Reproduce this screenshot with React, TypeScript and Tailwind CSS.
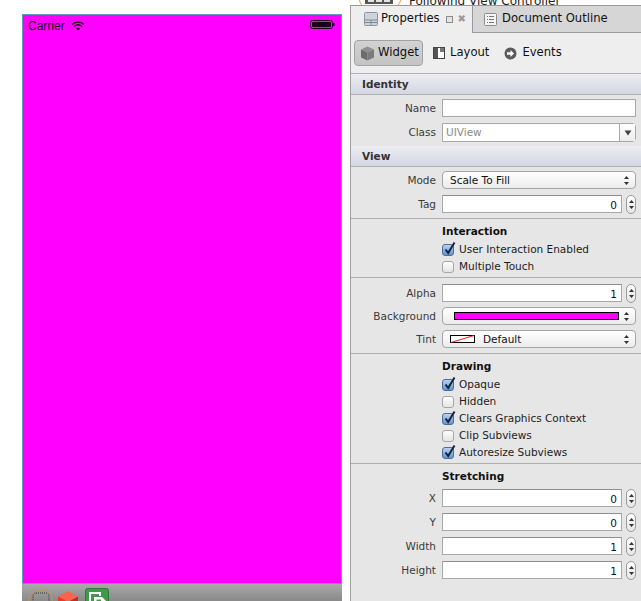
import React from 'react';

const Label: React.FC<{ text: string }> = ({ text }) => (
  <div className="w-[86px] shrink-0 text-right text-[#3a3a3a] pr-[1px] pt-[1px]">{text}</div>
);

const UpDown: React.FC = () => (
  <svg width="7" height="11" viewBox="0 0 7 11" className="shrink-0">
    <path d="M3.5 1 L6 4 H1 Z M3.5 10 L6 7 H1 Z" fill="#333" />
  </svg>
);

const Stepper: React.FC = () => (
  <div className="ml-[4px] w-[10px] h-[19px] rounded-[5px] border border-[#9a9a9a] bg-gradient-to-b from-white to-[#e6e6e6] flex items-center justify-center shrink-0">
    <UpDown />
  </div>
);

const NumberRow: React.FC<{ label: string; value: string; className?: string }> = ({ label, value, className }) => (
  <div className={`flex items-center h-[18px] ${className ?? ''}`}>
    <Label text={label} />
    <div className="ml-[5px] w-[180px] h-[18px] border border-[#a8a8a8] border-t-[#8e8e8e] bg-white text-right pr-[4px] leading-[18px] text-[#111]">
      {value}
    </div>
    <Stepper />
  </div>
);

const SelectRow: React.FC<{ label: string; className?: string; children: React.ReactNode }> = ({ label, className, children }) => (
  <div className={`flex items-center h-[18px] ${className ?? ''}`}>
    <Label text={label} />
    <div className="ml-[5px] w-[194px] h-[18px] rounded-[4px] border border-[#a6a6a6] bg-gradient-to-b from-white to-[#ececec] flex items-center pr-[5px]">
      <div className="flex-1 min-w-0 flex items-center">{children}</div>
      <UpDown />
    </div>
  </div>
);

const Check: React.FC<{ label: string; on?: boolean; className?: string }> = ({ label, on, className }) => (
  <div className={`flex items-center h-[17px] pl-[91px] ${className ?? ''}`}>
    <div className="relative w-[12px] h-[12px] shrink-0">
      <div
        className={
          on
            ? 'w-[12px] h-[12px] rounded-[3px] border border-[#4d6d99] bg-gradient-to-b from-[#b9d2ee] to-[#5f95d6]'
            : 'w-[12px] h-[12px] rounded-[3px] border border-[#a6a6a6] bg-gradient-to-b from-white to-[#e4e4e4]'
        }
      />
      {on && (
        <svg width="14" height="15" viewBox="0 0 14 15" className="absolute left-[1px] -top-[3px]">
          <path d="M2.5 8.5 L5.2 12 L11.5 1.5" fill="none" stroke="#12233c" strokeWidth="2" />
        </svg>
      )}
    </div>
    <span className="ml-[5px] text-[#1c1c1c]">{label}</span>
  </div>
);

const SectionHead: React.FC<{ title: string }> = ({ title }) => (
  <div className="h-[21px] pl-[11px] pt-[1px] flex items-center font-bold text-[#333] bg-gradient-to-b from-[#eceef3] to-[#d4d6e2] border-b border-[#aeaeae]">
    {title}
  </div>
);

const GroupTitle: React.FC<{ title: string; className?: string }> = ({ title, className }) => (
  <div className={`pl-[91px] font-bold text-[#111] h-[16px] leading-[16px] ${className ?? ''}`}>{title}</div>
);

export default function App() {
  return (
    <div
      className="w-[641px] h-[601px] overflow-hidden bg-white flex text-[10.5px]"
      style={{ fontFamily: '"DejaVu Sans", "Noto Sans", sans-serif' }}
    >
      {/* Canvas */}
      <div className="w-[350px] h-full shrink-0 pt-[14px] pl-[22px] pr-[8px] flex flex-col">
        <div className="h-[570px] shrink-0 bg-[#ff00ff] border border-[#5f9ab8] flex items-start justify-between pl-[5px] pr-[6px] pt-[4px]">
          <div className="flex items-center text-[12px] text-[#1a001a] h-[14px] leading-[14px]" style={{ fontFamily: '"Liberation Sans", sans-serif' }}>
            <span>Carrier</span>
            <svg width="14" height="10" viewBox="0 0 14 10" className="ml-[6px]">
              <path d="M1 3.4 C4.5 0.4 9.5 0.4 13 3.4 M3 5.5 C5.4 3.5 8.6 3.5 11 5.5" fill="none" stroke="#1a001a" strokeWidth="1.4" />
              <path d="M5 7.4 C6.2 6.4 7.8 6.4 9 7.4 L7 9.6 Z" fill="#1a001a" />
            </svg>
          </div>
          <svg width="25" height="10" viewBox="0 0 25 10" className="mt-[1px]">
            <rect x="0.5" y="0.5" width="22" height="8" rx="2" fill="none" stroke="#1a001a" />
            <rect x="2" y="2" width="19" height="5" rx="1" fill="#1a001a" />
            <rect x="23" y="3" width="1.5" height="3" fill="#1a001a" />
          </svg>
        </div>
        <div className="flex-1 bg-gradient-to-b from-[#aaaaaa] to-[#6f6f6f] flex items-start pl-[6px] pt-[5px]">
          <svg width="26" height="26" viewBox="0 0 26 26" className="shrink-0">
            <circle cx="12.5" cy="13" r="12" fill="none" stroke="#c8914a" />
            <rect x="5" y="4" width="16" height="14" rx="3" fill="none" stroke="#333" strokeDasharray="1 1" />
          </svg>
          <svg width="22" height="22" viewBox="0 0 22 22" className="shrink-0 mt-[1px] ml-[3px]">
            <path d="M11 1 L21 6.5 L11 12 L1 6.5 Z" fill="#f8654f" />
            <path d="M1 6.5 L11 12 V22 H1 Z" fill="#e8392b" />
            <path d="M21 6.5 L11 12 V22 H21 Z" fill="#c92a20" />
          </svg>
          <svg width="24" height="24" viewBox="0 0 24 24" className="shrink-0 -mt-[1px] ml-[6px]">
            <rect x="0.5" y="0.5" width="23" height="23" rx="2" fill="#3f9a4b" stroke="#2f7a3a" />
            <path d="M5 15 V5 H15 V8" fill="none" stroke="#fff" strokeWidth="2" />
            <path d="M9 9 H17 L21 13 V24 H9 Z" fill="#fff" />
            <path d="M11.5 11.5 H16 V15 H11.5 Z" fill="#3f9a4b" />
          </svg>
        </div>
      </div>

      {/* Inspector */}
      <div className="w-[291px] h-full shrink-0 flex flex-col bg-[#e6e6e6] border-l border-[#a0a0a0]">
        {/* cut off toolbar above the tabs */}
        <div className="h-[5px] -ml-[1px] bg-white overflow-hidden relative shrink-0">
          <div className="absolute left-[8px] -top-[28px] w-[44px] h-[44px] rounded-full border border-[#d9a24f]" />
          <div className="absolute left-[15px] -top-[6px] w-[28px] h-[10px] bg-[#555] flex items-center justify-center gap-[2px]">
            <div className="w-[6px] h-[6px] bg-[#e4e4e4]" />
            <div className="w-[6px] h-[6px] bg-[#e4e4e4]" />
            <div className="w-[6px] h-[6px] bg-[#e4e4e4]" />
          </div>
          <div className="absolute left-[59px] -top-[8px] text-[12px] text-[#222] whitespace-nowrap">Following View Controller</div>
        </div>
        {/* Tabs */}
        <div className="h-[28px] flex shrink-0 border-t border-[#9a9a9a] text-[11.6px]">
          <div className="w-[122px] bg-[#eeeeee] flex items-center pl-[13px] pb-[1px] text-[#111] border-r border-[#9a9a9a]">
            <svg width="14" height="14" viewBox="0 0 14 14" className="shrink-0">
              <rect x="0.5" y="0.5" width="13" height="13" rx="1" fill="#cdd3da" stroke="#8c95a0" />
              <path d="M1 8 H13 M1 10.5 H13 M7 8 V13" stroke="#7f8994" />
            </svg>
            <span className="ml-[3px]">Properties</span>
            <div className="ml-[6px] w-[7px] h-[7px] border border-[#8c8c8c] bg-[#e4e4e4]" />
            <span className="ml-[5px] text-[#9a9a9a] text-[10px] font-bold leading-none">✖</span>
          </div>
          <div className="flex-1 bg-[#d6d6d6] flex items-center pl-[11px] text-[#111] border-b border-[#9a9a9a]">
            <svg width="13" height="13" viewBox="0 0 13 13" className="shrink-0">
              <rect x="0.5" y="0.5" width="12" height="12" rx="1" fill="#f4f4f4" stroke="#8c8c8c" />
              <path d="M3 3.5 H4 M5 3.5 H10 M3 6.5 H4 M5 6.5 H10 M3 9.5 H4 M5 9.5 H10" stroke="#777" />
            </svg>
            <span className="ml-[5px]">Document Outline</span>
          </div>
        </div>
        {/* Widget / Layout / Events */}
        <div className="h-[41px] shrink-0 bg-[#eeeeee] border-b border-[#b4b4b4] flex items-center pl-[3px] text-[11.6px] text-[#111]">
          <div className="w-[69px] h-[26px] rounded-[4px] border border-[#a2a2a2] bg-gradient-to-b from-[#d2d2d2] to-[#c4c4c4] flex items-center pl-[5px]">
            <svg width="15" height="15" viewBox="0 0 15 15" className="shrink-0">
              <path d="M7.5 0.5 L14 3.5 L7.5 6.5 L1 3.5 Z" fill="#8f8f8f" />
              <path d="M1 3.5 L7.5 6.5 V14.5 L1 11.5 Z" fill="#6c6c6c" />
              <path d="M14 3.5 L7.5 6.5 V14.5 L14 11.5 Z" fill="#7a7a7a" />
            </svg>
            <span className="ml-[3px]">Widget</span>
          </div>
          <svg width="12" height="12" viewBox="0 0 12 12" className="ml-[10px] shrink-0">
            <rect x="0.5" y="0.5" width="11" height="11" fill="#fff" stroke="#444" />
            <rect x="1" y="1" width="4" height="10" fill="#555" />
            <rect x="7" y="1" width="4" height="4" fill="#777" />
          </svg>
          <span className="ml-[5px]">Layout</span>
          <svg width="13" height="13" viewBox="0 0 13 13" className="ml-[15px] shrink-0">
            <circle cx="6.5" cy="6.5" r="6" fill="#5a5a5a" />
            <path d="M3 5.2 H6.5 V3 L10 6.5 L6.5 10 V7.8 H3 Z" fill="#fff" />
          </svg>
          <span className="ml-[5px]">Events</span>
        </div>

        <SectionHead title="Identity" />
        <div className="flex items-center h-[18px] mt-[4px]">
          <Label text="Name" />
          <div className="ml-[5px] w-[194px] h-[18px] border border-[#a8a8a8] bg-white" />
        </div>
        <div className="flex items-center h-[19px] mt-[6px]">
          <Label text="Class" />
          <div className="ml-[5px] w-[194px] h-[19px] rounded-r-[4px] border border-[#a8a8a8] bg-white flex items-center">
            <span className="flex-1 pl-[3px] text-[#8a8a8a]">UIView</span>
            <div className="w-[16px] h-full border-l border-[#a8a8a8] flex items-center justify-center bg-gradient-to-b from-white to-[#ececec]">
              <svg width="8" height="6" viewBox="0 0 8 6"><path d="M0.5 0.5 H7.5 L4 5.5 Z" fill="#444" /></svg>
            </div>
          </div>
        </div>

        <div className="mt-[4px]">
          <SectionHead title="View" />
        </div>
        <SelectRow label="Mode" className="mt-[4px]">
          <span className="pl-[7px] pt-[1px] text-[#111]">Scale To Fill</span>
        </SelectRow>
        <div className="mt-[6px]">
          <NumberRow label="Tag" value="0" />
        </div>
        <div className="mt-[5px] border-t border-[#aeaeae]" />
        <GroupTitle title="Interaction" className="mt-[4px]" />
        <Check label="User Interaction Enabled" on className="mt-[2px]" />
        <Check label="Multiple Touch" />
        <div className="mt-[2px] border-t border-[#aeaeae]" />
        <NumberRow label="Alpha" value="1" className="mt-[6px]" />
        <SelectRow label="Background" className="mt-[5px]">
          <div className="ml-[11px] w-[165px] h-[8px] bg-[#ff00ff] border border-black" />
        </SelectRow>
        <SelectRow label="Tint" className="mt-[5px]">
          <svg width="25" height="8" viewBox="0 0 25 8" className="ml-[7px] shrink-0">
            <rect x="0.5" y="0.5" width="24" height="7" fill="#fff" stroke="#000" />
            <path d="M1 7.5 L24 0.5" stroke="#e02020" />
          </svg>
          <span className="ml-[8px] pt-[1px] text-[#111]">Default</span>
        </SelectRow>
        <div className="mt-[5px] border-t border-[#aeaeae]" />
        <GroupTitle title="Drawing" className="mt-[4px]" />
        <Check label="Opaque" on className="mt-[2px]" />
        <Check label="Hidden" />
        <Check label="Clears Graphics Context" on />
        <Check label="Clip Subviews" />
        <Check label="Autoresize Subviews" on />
        <div className="mt-[2px] border-t border-[#aeaeae]" />
        <GroupTitle title="Stretching" className="mt-[4px]" />
        <NumberRow label="X" value="0" className="mt-[5px]" />
        <NumberRow label="Y" value="0" className="mt-[6px]" />
        <NumberRow label="Width" value="1" className="mt-[6px]" />
        <NumberRow label="Height" value="1" className="mt-[6px]" />
      </div>
    </div>
  );
}
